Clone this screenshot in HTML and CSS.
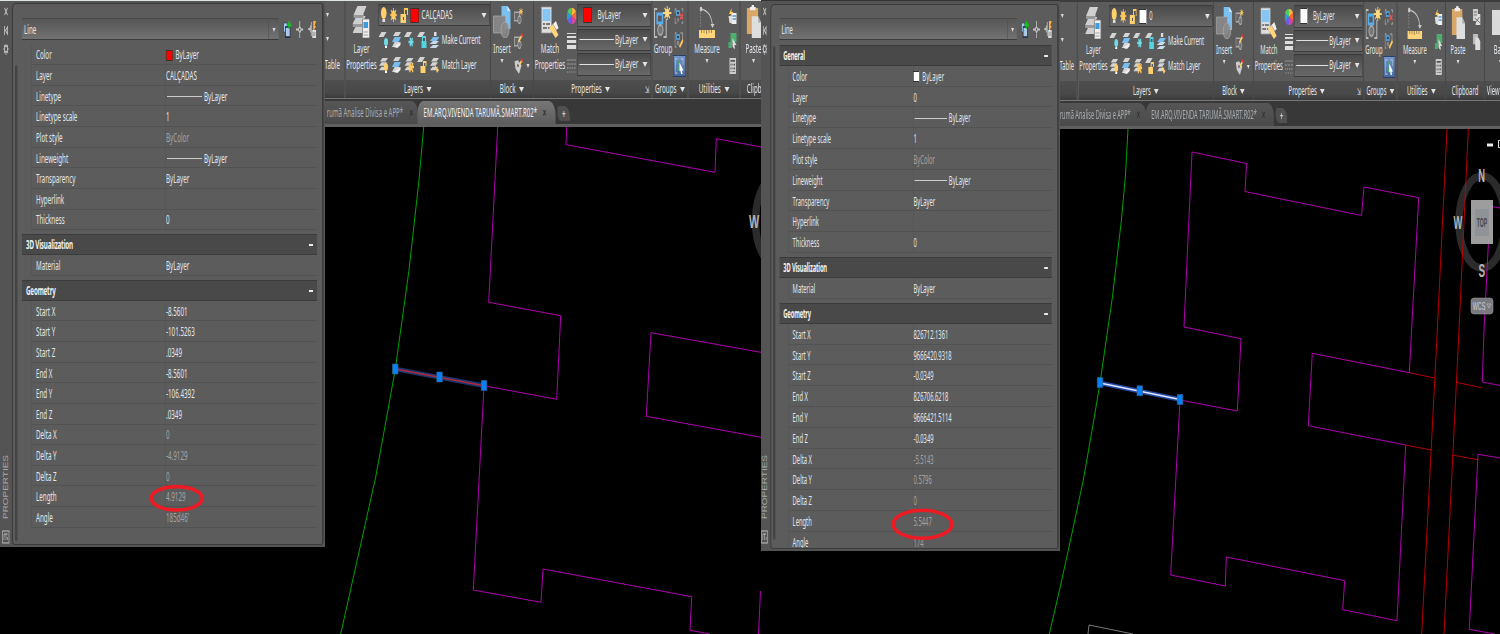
FILE: index.html
```html
<!DOCTYPE html>
<html lang="en">
<head>
<meta charset="utf-8">
<title>Drawing comparison</title>
<link rel="stylesheet" href="styles.css">
</head>
<body>
<svg class="symbols" aria-hidden="true">
  <symbol id="i-sheets" viewBox="0 0 20 16" preserveAspectRatio="none"><path d="M8 1h11l-5 4H3zM6 6h11l-5 4H1zM6 11h11l-5 4H1z" fill="#d4d4d4"/></symbol>
  <symbol id="i-layerprops" viewBox="0 0 36 32" preserveAspectRatio="none"><path d="M10 0h18l-7 9H2zM8 10h18l-6 8H0zM8 19h13v8H0z" fill="#cfcfcf"/><path d="M2 9h19l2-3v3l-2 3H2zM0 18h20l2-3v4l-2 2H0z" fill="#999"/><path d="M20 13h14v19H20z" fill="#eee" stroke="#777"/><path d="M22 16h9v6h-9z" fill="#3d9be0"/><path d="M22 26h9M22 29h9" stroke="#888"/></symbol>
  <symbol id="i-off" viewBox="0 0 20 16" preserveAspectRatio="none"><path d="M6 0h10l-6 5H0z" fill="#d4d4d4"/><circle cx="15" cy="10" r="4" fill="#6fdbe6"/><path d="M13 14h4v2h-4z" fill="#fff"/></symbol>
  <symbol id="i-iso" viewBox="0 0 20 16" preserveAspectRatio="none"><path d="M8 0h11l-5 4H3zM6 10h11l-5 5H1z" fill="#d4d4d4"/><path d="M6 5h13l-5 5H1z" fill="#78bdf0"/><path d="M4 15l14-5v3l-6 3z" fill="#eee"/></symbol>
  <symbol id="i-freeze" viewBox="0 0 20 16" preserveAspectRatio="none"><path d="M6 0h10l-6 5H0z" fill="#d4d4d4"/><path d="M9 10h10M12 6l5 8M17 6l-5 8" stroke="#6fdbe6" stroke-width="2.4"/></symbol>
  <symbol id="i-lockl" viewBox="0 0 20 16" preserveAspectRatio="none"><path d="M6 0h10l-6 5H0z" fill="#d4d4d4"/><path d="M9 9h10v7H9z" fill="#52d5e2"/><path d="M11 9V5h6v4" fill="none" stroke="#52d5e2" stroke-width="2"/></symbol>
  <symbol id="i-current" viewBox="0 0 20 16" preserveAspectRatio="none"><path d="M7 5h13l-6 4H1z" fill="#78bdf0"/><path d="M7 9h12l-6 3H0zM7 13h12l-6 3H0z" fill="#c9dbe8"/><path d="M9 0h5v4H9z" fill="#ddd"/></symbol>
  <symbol id="i-on" viewBox="0 0 20 16" preserveAspectRatio="none"><use href="#i-sheets" width="20" height="14"/><circle cx="15" cy="10" r="4" fill="#ffd06b"/><path d="M13 14h4v2h-4z" fill="#fff"/></symbol>
  <symbol id="i-thaw" viewBox="0 0 20 16" preserveAspectRatio="none"><use href="#i-sheets" width="20" height="14"/><path d="M9 10h11M11 6l7 9M18 6l-7 9" stroke="#ffc95d" stroke-width="2.5"/></symbol>
  <symbol id="i-unlockl" viewBox="0 0 20 16" preserveAspectRatio="none"><path d="M6 0h10l-6 5H0z" fill="#d4d4d4"/><path d="M7 9h10v7H7z" fill="#ffd06b"/><path d="M13 9V5h5v4" fill="none" stroke="#ffd06b" stroke-width="2"/></symbol>
  <symbol id="i-matchl" viewBox="0 0 20 16" preserveAspectRatio="none"><use href="#i-sheets" width="20" height="14"/><path d="M10 8l9 5-4 3z" fill="#ffd06b"/></symbol>
  <symbol id="i-bulb" viewBox="0 0 14 16" preserveAspectRatio="none"><ellipse cx="7" cy="6" rx="6" ry="6" fill="#ffd06b"/><path d="M4 12h6v3H4z" fill="#ddd"/></symbol>
  <symbol id="i-sun" viewBox="0 0 16 16" preserveAspectRatio="none"><path d="M8 1v14M1 8h14M3 3l10 10M13 3L3 13" stroke="#ffc95d" stroke-width="1.600"/><circle cx="8" cy="8" r="4.500" fill="#ffc95d"/></symbol>
  <symbol id="i-unlock" viewBox="0 0 16 16" preserveAspectRatio="none"><path d="M1 7h11v9H1z" fill="#ffd06b"/><path d="M9 7V2h6v6" fill="none" stroke="#ffc95d" stroke-width="2"/><path d="M6 10h2v3H6z" fill="#555"/></symbol>
  <symbol id="i-insert" viewBox="0 0 36 32" preserveAspectRatio="none"><path d="M17 0h12l6 5v18H17z" fill="#7cc0f2"/><path d="M29 0v5h6z" fill="#d5ecff"/><path d="M1 10h24v17H1z" fill="#858585" stroke="#a8a8a8"/><circle cx="24" cy="24" r="8" fill="#888" fill-opacity=".85" stroke="#aaa"/></symbol>
  <symbol id="i-blk" viewBox="0 0 18 15" preserveAspectRatio="none"><path d="M1 4h10v8H1z" fill="#666" stroke="#ababab" stroke-width="1.5"/><circle cx="11" cy="11" r="3.4" fill="#777" stroke="#bbb"/><path d="M14 0v7M10 3.500h8M11 1l6 5M17 1l-6 5" stroke="#ffc95d"/></symbol>
  <symbol id="i-blkedit" viewBox="0 0 18 15" preserveAspectRatio="none"><path d="M1 4h10v8H1z" fill="#666" stroke="#ababab" stroke-width="1.5"/><circle cx="11" cy="11" r="3.400" fill="#777" stroke="#bbb"/><path d="M9 8l7-6" stroke="#ffd06b" stroke-width="2.500"/><path d="M15 1l2 2" stroke="#e33" stroke-width="3"/></symbol>
  <symbol id="i-tag" viewBox="0 0 18 15" preserveAspectRatio="none"><path d="M1 3l7-1 7 5-5 8-7-5z" fill="#ccc"/><circle cx="8" cy="7" r="1.600" fill="#555"/><path d="M10 7l6-5" stroke="#ffd06b" stroke-width="2.500"/><path d="M15 1l2 2" stroke="#e33" stroke-width="3"/></symbol>
  <symbol id="i-matchp" viewBox="0 0 36 32" preserveAspectRatio="none"><path d="M1 1h20v26H1z" fill="#ddd" stroke="#999"/><path d="M3 3h16v12H3z" fill="#86c6f4"/><path d="M4 18h4m2 0h8M4 22h8m2 0h4" stroke="#555" stroke-width="1.500"/><path d="M16 22l8-4 11 11-6 3z" fill="#ffd57c"/><path d="M24 18l6-3 5 7-4 2z" fill="#eee"/></symbol>
  <symbol id="i-wheel" viewBox="0 0 20 16" preserveAspectRatio="none"><path d="M10 8V0a10 8 0 0 1 9 4z" fill="#ffb33d"/><path d="M10 8l9-4a10 8 0 0 1 0 8z" fill="#ff6537"/><path d="M10 8l9 4a10 8 0 0 1-9 4z" fill="#d944a2"/><path d="M10 8v8a10 8 0 0 1-9-4z" fill="#705be6"/><path d="M10 8l-9 4a10 8 0 0 1 0-8z" fill="#279edb"/><path d="M10 8L1 4a10 8 0 0 1 9-4z" fill="#54cc5b"/></symbol>
  <symbol id="i-weights" viewBox="0 0 20 16" preserveAspectRatio="none"><path d="M0 0h20v1H0zM0 3h20v2H0zM0 7h20v3H0zM0 12h20v4H0z" fill="#ddd"/></symbol>
  <symbol id="i-types" viewBox="0 0 20 16" preserveAspectRatio="none"><path d="M0 2h20" stroke="#aaa"/><path d="M0 6h20" stroke="#bbb" stroke-dasharray="5 2"/><path d="M0 10h20" stroke="#ccc" stroke-dasharray="3 2"/><path d="M0 14h20" stroke="#bbb" stroke-dasharray="2 2"/></symbol>
  <symbol id="i-group" viewBox="0 0 34 32" preserveAspectRatio="none"><path d="M6 3H1v28h5M18 31h5V13" fill="none" stroke="#bbb" stroke-width="2"/><path d="M6 8h10v9H6z" fill="none" stroke="#55aef0" stroke-width="3"/><circle cx="12" cy="24" r="5" fill="#777" stroke="#aaa" stroke-width="2"/><path d="M25 0v14M17 7h16M20 2l10 10M30 2L20 12" stroke="#ffd06b" stroke-width="1.800"/><circle cx="25" cy="7" r="4" fill="#ffd985"/></symbol>
  <symbol id="i-ungroup" viewBox="0 0 18 16" preserveAspectRatio="none"><path d="M4 1H1v4M1 10v5h3M14 1h3v3M14 15h3v-2" stroke="#bbb" stroke-width="1.200" fill="none"/><path d="M4 3h6v4H4z" fill="#444" stroke="#55aef0" stroke-width="1.600"/><circle cx="7" cy="12" r="2" fill="#888"/><path d="M11 6l6 5M17 6l-6 5" stroke="#ee5353" stroke-width="2"/></symbol>
  <symbol id="i-gedit" viewBox="0 0 18 16" preserveAspectRatio="none"><path d="M4 1H1v14h3M12 1h4v9" stroke="#bbb" stroke-width="1.200" fill="none"/><path d="M4 3h6v4H4z" fill="#444" stroke="#55aef0" stroke-width="1.600"/><circle cx="7" cy="11" r="2.500" fill="#888"/><path d="M10 15l7-7" stroke="#ffc95d" stroke-width="3"/></symbol>
  <symbol id="i-gsel" viewBox="0 0 18 18" preserveAspectRatio="none"><path d="M5 1H1v16h4M12 1h4v7" stroke="#b4c2d6" stroke-width="1.200" fill="none"/><path d="M5 3h5v4H5z" fill="#3ca964"/><circle cx="7" cy="12" r="2.500" fill="#3ca964"/><path d="M9 5l8 9h-3l1 4-3 0-1-4-2 1z" fill="#fff"/></symbol>
  <symbol id="i-measure" viewBox="0 0 32 32" preserveAspectRatio="none"><path d="M3 4v17" stroke="#888" stroke-dasharray="2 1"/><path d="M3 3c14 1 23 7 24 18" fill="none" stroke="#c4c4c4" stroke-width="1.500"/><circle cx="4" cy="3" r="2.500" fill="#ccc"/><path d="M23 18h8l-4 4z" fill="#ccc"/><path d="M0 24h32v8H0z" fill="#ffd47b"/><path d="M5 24v3m5-3v3m5-3v4m5-4v3m5-3v3" stroke="#8b7444"/></symbol>
  <symbol id="i-quick" viewBox="0 0 18 16" preserveAspectRatio="none"><path d="M7 5h10v11H7z" fill="#eee"/><path d="M1 8h7v7H3z" fill="#ddd"/><path d="M9 8h7M9 11h7" stroke="#4d98d5" stroke-width="1.500"/><path d="M7 0L2 6h4L4 9l7-5H7z" fill="#ffc95d"/></symbol>
  <symbol id="i-qsel" viewBox="0 0 18 16" preserveAspectRatio="none"><path d="M5 0h12v9H5zM1 9h7v6H1z" fill="#4caf70"/><path d="M9 5l8 7h-4l1 4-3-1-2-2z" fill="#ddd"/></symbol>
  <symbol id="i-calc" viewBox="0 0 18 17" preserveAspectRatio="none"><path d="M3 0h13v17H3z" fill="#ccc"/><path d="M5 2h9v2H5zM5 6h2v2H5zM9 6h2v2H9zM12 6h2v2h-2zM5 10h2v2H5zM9 10h2v2H9zM12 10h2v2h-2zM5 14h2v1H5zM9 14h5v1H9z" fill="#555"/></symbol>
  <symbol id="i-paste" viewBox="0 0 30 32" preserveAspectRatio="none"><path d="M0 3h24v25H0z" fill="#d9a868"/><path d="M7 5V2h3l1-2h4l1 2h3v3z" fill="#eee"/><path d="M11 11h13l6 6v15H11z" fill="#dedede"/><path d="M24 11v6h6z" fill="#aaa"/></symbol>
  <symbol id="i-cut" viewBox="0 0 18 16" preserveAspectRatio="none"><path d="M1 0h11v12H1z" fill="#ccc"/><path d="M7 5h10v11H7z" fill="#ddd"/><path d="M3 3h7M3 6h7M6 9l10 5M6 14l9-6" stroke="#555"/></symbol>
  <symbol id="i-copy" viewBox="0 0 18 17" preserveAspectRatio="none"><path d="M1 0h11v11H1z" fill="#bbb"/><path d="M6 4h7l4 4v9H6z" fill="#ddd"/></symbol>
  <symbol id="i-base" viewBox="0 0 32 32" preserveAspectRatio="none"><path d="M0 3h32v25H0z" fill="#dadada"/></symbol>
  <symbol id="i-addsel" viewBox="0 0 20 17" preserveAspectRatio="none"><path d="M2 2h8v9H2z" fill="#9ccaf1" stroke="#34414f"/><path d="M6 6h10v10H6z" fill="#a9c8ea" stroke="#1c2a3b" stroke-width="1.500"/><path d="M14 0v8M10 4h9" stroke="#14c01f" stroke-width="3"/></symbol>
  <symbol id="i-pick" viewBox="0 0 16 16" preserveAspectRatio="none"><path d="M8 0v5M8 11v5M0 8h5M11 8h5M8 5l3 3-3 3-3-3z" fill="none" stroke="#c6c6c6" stroke-width="1.700"/></symbol>
  <symbol id="i-qselect" viewBox="0 0 20 17" preserveAspectRatio="none"><path d="M8 1v14M1 8h7M8 4L4 8l4 4" fill="none" stroke="#c6c6c6" stroke-width="1.600"/><path d="M12 0h6l-3 5h3l-6 6z" fill="#ffb13b"/><path d="M10 9h8v8h-8z" fill="#ddd"/><path d="M11 12h6M11 14h6" stroke="#666"/></symbol>
</svg>
<main class="compare">
  <section class="palette-cell" data-palette="left"></section>
  <section class="work work-left">
    <div class="ribbon-cell" data-ribbon="left"></div>
    <svg class="canvas" viewBox="325 127 436 507">
      <g class="plan">
        <path class="boundary" d="M423.700 127L419 180L409 270L395.300 369L386.700 417L375.700 477L361.700 540L340.700 634"/>
        <path d="M497.700 127L488.700 302.300L560.700 315.700L556.700 399.300L484 385.700L473.300 590L541 602.300L543 569L691.700 596.700L690 630.300L710 634"/>
        <path d="M566.700 127L566 144.700L715 172.300L716.300 138.700L761 147M761 352.300L651 332.700L646.300 416.300L761 437.300M760.500 591L758.500 634"/>
      </g>
      <path class="glow" d="M395.300 369L484 385.700"/><path class="picked picked-red" d="M395.300 369L484 385.700"/>
      <g class="grips"><path d="M392.500 364h5.500v10h-5.500zM436.800 372h5.500v10h-5.500zM481.300 380.500h5.500v10h-5.500z"/></g>
      <ellipse class="ring" cx="779" cy="221" rx="23.500" ry="46"/>
      <text class="compass" transform="translate(754 228) scale(.6 1)">W</text>
    </svg>
  </section>
  <section class="palette-cell" data-palette="right"></section>
  <section class="work work-right">
    <div class="ribbon-cell" data-ribbon="right"></div>
    <svg class="canvas" viewBox="1060 129 440 505">
      <ellipse class="ring" cx="1482" cy="222" rx="23" ry="46"/>
      <g class="plan">
        <path class="boundary" d="M1128 129L1125.500 175L1121.300 221L1112.300 298L1100 383L1093.300 423L1083.300 480L1072.700 530L1060 588L1049.300 634"/>
        <path d="M1192 152L1184 327L1241 338.700L1237.300 411L1180 400L1170.700 575L1225.300 586L1226.300 557L1344.700 580.700L1342.700 609.700L1397 620.700L1405.700 445L1308.300 425.700L1312.300 353.300L1409.300 372.700L1418.700 197.700L1364 187L1361.500 215.500L1245 191.500L1246.500 163.500Z"/>
        <path d="M1500 208L1490.300 206.300L1484 330L1482.300 382L1500 385.500M1500 458L1478 454.300L1469.300 629.300L1495 634"/>
        <path class="axis" d="M1447 129L1437.300 330L1421.700 634M1468.300 129L1459 330L1444 634M1409.300 372.700L1434.700 378M1405.700 445L1431 450M1456 382.300L1481.700 387.700M1452.300 455L1477.700 459.700"/>
        <path class="grey" d="M1088 634L1089 625L1133 634"/>
      </g>
      <path class="cube" d="M1471 200h22v44h-22z"/><path class="cube-face" d="M1475 209h14v27h-14z"/>
      <rect class="wcs" x="1471" y="298" width="22" height="16" rx="3"/>
      <path class="glow glow-bright" d="M1100 383L1180 399.500"/><path class="picked" d="M1100 383L1180 399.500"/>
      <g class="grips"><path d="M1097.300 377.500h5.500v10h-5.500zM1137 385.700h5.500v10h-5.500zM1177.300 394.500h5.500v10h-5.500z"/></g>
      <g class="compass"><text transform="translate(1481.700 181.500) scale(.52 1)">N</text><text transform="translate(1458 228.500) scale(.52 1)">W</text><text transform="translate(1481.700 277) scale(.55 1)">S</text></g>
      <text class="cube-label" transform="translate(1482 226.500) scale(.42 1)">TOP</text>
      <text class="wcs-label" transform="translate(1479 310) scale(.48 1)">WCS</text>
      <path class="wcs-arrow" d="M1487 304h4l-2 4z"/>
      <path class="window-buttons" d="M1487 143.500h6v3h-6z"/><path class="restore" d="M1501 140.500h-2.500v7h2.500"/>
    </svg>
  </section>
  <svg class="marks" viewBox="0 0 1500 634"><ellipse cx="176.700" cy="498.300" rx="25.500" ry="11.700"/><ellipse cx="922.500" cy="524.300" rx="29.300" ry="14"/></svg>
</main>
<script src="app.js"></script>
</body>
</html>
```

FILE: styles.css
```css
* { box-sizing: border-box; }
body { margin: 0; background: #000; font: 12.5px/16px "Noto Sans", "Open Sans", sans-serif; color: #e3e6ea; overflow: hidden; }
.symbols { display: none; }
.compare { position: relative; display: grid; grid-template-columns: 325px 436px 299px 440px; width: 1500px; height: 634px; overflow: hidden; }
svg { display: block; flex: none; }
.marks { position: absolute; inset: 0; width: 1500px; height: 634px; fill: none; stroke: #ed1c24; stroke-width: 3.6; pointer-events: none; }

/* Both captures are shown narrower than they were drawn. */
.squeeze { transform: scaleX(.5); transform-origin: 0 0; width: 872px; }
.right .squeeze, .squeeze.right { transform: scaleX(.465); }

/* work area */
.work { display: flex; flex-direction: column; min-width: 0; }
.ribbon-cell { height: 127px; flex: none; overflow: hidden; }
.work-right .ribbon-cell { height: 129px; }
.canvas { width: 100%; flex: 1; min-height: 0; overflow: visible; }
.plan { fill: none; stroke: #c400c4; stroke-width: .9; }
.boundary { stroke: #00b400; }
.axis { stroke: #cc0000; }
.grey { stroke: #888; }
.glow { stroke: #17386f; stroke-width: 4.5; }
.glow-bright { stroke: #2549a0; }
.picked { stroke: #dfe6ff; stroke-width: 1.6; }
.picked-red { stroke: #b3263c; }
.grips { fill: #0a80f5; stroke: #33628f; stroke-width: .6; }
.ring { fill: none; stroke: #2b2b2b; stroke-width: 7.5; }
.compass { fill: #b4b4b4; font: bold 18px "Liberation Sans", sans-serif; text-anchor: middle; }
.cube { fill: #a5a5a5; fill-opacity: .95; } .cube-face { fill: #8f9296; }
.cube-label { fill: #44474b; font: bold 12px "Liberation Sans", sans-serif; text-anchor: middle; }
.wcs { fill: #85858d; fill-opacity: .9; stroke: #a0a0a6; stroke-width: .5; }
.wcs-label { fill: #d3d3d3; font: 11px "Liberation Sans", sans-serif; text-anchor: middle; }
.wcs-arrow { fill: none; stroke: #c5c5c5; stroke-width: .6; }
.window-buttons { fill: #ececec; }
.restore { fill: none; stroke: #ececec; }

/* ribbon */
.ribbon { height: 99px; display: flex; background: #5b5b5b; border-top: 1px solid #dfe5df; border-bottom: 1px solid #777; }
.squeeze.right { width: 950px; }
.right .ribbon { height: 101px; border-top: 2px solid #3d3d3d; }
.panel { flex: none; display: flex; flex-direction: column; border-right: 2px solid #484848; overflow: hidden; white-space: nowrap; }
.panel-body { flex: none; height: 79px; display: flex; }
.panel-title { flex: 1; display: flex; align-items: center; justify-content: center; gap: 7px; background: linear-gradient(#4e4e4e, #484848 70%, #3b3b3b); }
.panel-title .corner { margin-left: auto; margin-right: 5px; font-size: 10px; }
.right .panel-title { padding-top: 1px; }
.down { width: 0; height: 0; border: 5px solid transparent; border-top: 5px solid #e4e4e4; border-bottom: 0; flex: none; }
.down-sm { width: 0; height: 0; border: 3.5px solid transparent; border-top: 4px solid #ddd; border-bottom: 0; flex: none; }
.stub { width: 41px; }
.right .stub { width: 38px; }
.stub-body { flex-direction: column; align-items: flex-end; width: 30px; padding-top: 12px; }
.stub-body .down-sm { margin: 0 22px 20px 0; }
.stub-body .label { margin-top: -4px; }
.big { display: flex; flex-direction: column; align-items: center; padding-top: 5px; flex: none; }
.big svg { margin-bottom: 3px; width: 36px; height: 32px; }
.big .down-sm { margin-top: 2px; }
.layers { width: 291px; } .layers .big { width: 64px; }
.right .layers { margin-left: 2px; }
.layer-tools { display: flex; flex-direction: column; width: 224px; padding-top: 3px; margin-left: 2px; }
.combo { display: flex; align-items: center; height: 22px; flex: none; border: 1.5px solid #3a3a3a; background: linear-gradient(#4b4b4b, #696969); padding: 0 6px 0 4px; }
.combo .down { margin-left: auto; }
.layer-combo { padding-left: 3px; gap: 5px; }
.layer-combo svg { width: 16px; height: 16px; }
.layer-combo svg:first-child { width: 13px; }
.swatch { width: 17px; height: 15px; flex: none; border: 1px solid #333; }
.red { background: #f00; } .white { background: #fff; }
.icon-row { display: flex; align-items: center; height: 16px; gap: 5.5px; margin-top: 6px; letter-spacing: -.25px; }
.icon-row + .icon-row { margin-top: 9px; }
.icon-row svg { width: 20px; height: 16px; }
.icon-row .label { margin-left: -1px; }
.block { width: 86px; } .block .big { width: 44px; }
.stack { display: flex; flex-direction: column; padding: 7px 0 0 2px; gap: 9px; }
.stack svg { width: 18px; height: 16px; }
.stack-row { display: flex; align-items: center; gap: 7px; }
.props { width: 237px; } .props .big { width: 64px; }
.prop-icons { display: flex; flex-direction: column; gap: 9px; padding: 7px 0 0 2px; width: 22px; }
.prop-icons svg { width: 19px; height: 16px; }
.prop-combos { display: flex; flex-direction: column; gap: 2px; padding-top: 3px; width: 148px; }
.prop-combos .combo { height: 22.5px; }
.prop-combos .swatch { margin: 0 11px 0 8px; height: 16px; }
.stroke { width: 69px; height: 1.2px; background: #e2e2e2; flex: none; margin-right: 2px; }
.groups { width: 72px; } .groups .big { width: 42px; }
.groups .stack { padding-left: 2px; gap: 8px; }
.selected { margin: -1px 0 0 -3px; width: 26px; height: 22px; padding: 2px 3px; background: linear-gradient(#7596cb, #49689b); border: 1px solid #29406b; }
.utils { width: 104px; } .utils .big { width: 74px; } .utils .big svg { width: 32px; }
.utils .stack { padding-left: 5px; }
.clip { width: 84px; } .clip .big { width: 52px; padding-top: 4px; } .clip .big svg { width: 29px; height: 33px; }
.clip .stack { padding-left: 5px; }
.view { width: 90px; } .view .big { width: 66px; } .view .panel-title { justify-content: flex-start; padding-left: 4px; }

/* drawing tabs */
.tabs { height: 28px; display: flex; align-items: stretch; background: #383838; border-bottom: 3px solid #606060; padding-top: 2px; white-space: nowrap; }
.tab { display: flex; align-items: center; flex: none; background: linear-gradient(#565656, #4a4a4a); color: #a7adb2; font-size: 12px; border-radius: 0 14px 0 0 / 0 12px 0 0; }
.tab-a { width: 186px; justify-content: flex-end; padding-right: 10px; gap: 13px; letter-spacing: 0; }
.right .tab-a { width: 185px; padding-right: 13px; }
.tab-b { width: 276px; margin-left: -1px; padding-left: 12px; gap: 11px; letter-spacing: .17px; border-radius: 12px 14px 0 0; }
.tab.active { background: linear-gradient(#777, #5d5d5d); color: #f2f2f2; }
.tab .close { color: #333; font: bold 12px/12px "Liberation Sans", sans-serif; }
.new-tab { width: 25px; margin: 5px 0 3px 4px; display: grid; place-items: center; background: #505050; border-radius: 4px 12px 0 8px; font-weight: bold; color: #ccc; }

/* properties palette */
.palette-cell { min-width: 0; overflow: hidden; height: 547px; }
.palette-cell.right { height: 551px; }
.palette { --row: 20.63px; width: 650px; height: 547px; display: flex; background: #545454; border-top: 1px solid #dfe5df; white-space: nowrap; }
.right .palette { --row: 20.8px; width: 647px; height: 551px; margin-left: -4px; border-top: 1px solid #333; }
.side { width: 24px; flex: none; display: flex; }
.sheet { flex: 1; margin: 2px 3px 2px 0; border: 1px solid #3b3b3b; border-width: 1px 3px 1px 2px; border-radius: 7px 5px 5px 5px; background: #5c5c5c; padding: 14px 10px 0 18px; display: flex; flex-direction: column; overflow: hidden; }
.right .sheet { margin-top: 3px; padding-top: 13px; }
.picker { display: flex; align-items: center; height: 22px; flex: none; }
.picker-box { width: 513px; height: 22px; display: flex; align-items: center; padding: 1px 6px 0 4px; background: linear-gradient(#565656, #727272); border-bottom: 1px solid #3a3a3a; border-top: 1px solid #494949; margin-right: 8px; }
.picker-box .drop { margin-left: auto; height: 100%; padding-left: 7px; border-left: 1px solid #4a4a4a; display: flex; align-items: center; }
.picker svg { width: 19px; height: 17px; }
.picker svg + svg { margin-left: 8px; }
.picker svg:nth-of-type(2) { width: 15px; }
.scroll { display: flex; margin: 4.6px 0 0 -14px; flex: 1; }
.thumb { width: 5px; height: 476px; margin: 20px 9px 0 0; background: #444; border-radius: 3px; flex: none; }
.right .thumb { margin-top: 1px; height: 494px; }
.groups-list { flex: 1; }
.right .groups-list { margin-right: 2px; }
.head { height: 21.3px; background: #494949; border-top: 1px solid #3b3b3b; border-bottom: 1px solid #3b3b3b; display: flex; align-items: center; justify-content: space-between; padding: 1px 8px 0 8px; font-weight: bold; letter-spacing: -.35px; color: #f1f1f1; }
.head i { width: 8px; height: 2px; background: #eee; }
.rows { margin: 0 0 3.7px 19px; border-left: 1px solid #535353; }
.row { height: var(--row); display: grid; grid-template-columns: 268px 1fr; border-bottom: 1px solid #525252; }
.row > span { display: flex; align-items: center; padding-top: 2px; }
.row > span:first-child { padding-left: 8px; border-right: 1px solid #535353; }
.row .value { padding-left: 0; gap: 6px; }
.row .swatch { width: 13px; height: 11px; }
.row .stroke { width: 70px; margin: 0 -2px 0 2px; background: #cdcdcd; }
.row .muted { color: #a3a3a3; }
```

FILE: app.js
```js
const icon = (name) => `<svg><use href="#i-${name}" width="100%" height="100%"/></svg>`;
const down = '<b class="down"></b>';
const downSm = '<b class="down-sm"></b>';
const big = (name, ...lines) => `<div class="big">${icon(name)}${lines.join("")}</div>`;
const label = (text) => `<span class="label">${text}</span>`;
const panel = (cls, body, title) =>
  `<div class="panel ${cls}"><div class="panel-body ${cls}-body">${body}</div><div class="panel-title">${title}</div></div>`;

function ribbon(side) {
  const left = side === "left";
  const color = left ? "red" : "white";
  const line = `<div class="combo"><i class="stroke"></i>ByLayer${down}</div>`;
  const strip = [
    panel("stub", downSm + downSm + label("Table"), ""),
    panel("layers", big("layerprops", label("Layer"), label("Properties")) +
      `<div class="layer-tools">
        <div class="combo layer-combo">${icon("bulb")}${icon("sun")}${icon("unlock")}<i class="swatch ${color}"></i>${left ? "CALÇADAS" : "0"}${down}</div>
        <div class="icon-row">${["off", "iso", "freeze", "lockl", "current"].map(icon).join("")}${label("Make Current")}</div>
        <div class="icon-row">${["on", "iso", "thaw", "unlockl", "matchl"].map(icon).join("")}${label("Match Layer")}</div>
      </div>`, "Layers" + down),
    panel("block", big("insert", label("Insert"), downSm) +
      `<div class="stack">${icon("blk")}${icon("blkedit")}<div class="stack-row">${icon("tag")}${downSm}</div></div>`, "Block" + down),
    panel("props", big("matchp", label("Match"), label("Properties")) +
      `<div class="prop-icons">${icon("wheel")}${icon("weights")}${icon("types")}</div>
       <div class="prop-combos"><div class="combo"><i class="swatch ${color}"></i>ByLayer${down}</div>${line}${line}</div>`,
      `<span class="corner"></span>Properties${down}<span class="corner">⇲</span>`),
    panel("groups", big("group", label("Group")) +
      `<div class="stack">${icon("ungroup")}${icon("gedit")}<div class="selected">${icon("gsel")}</div></div>`, "Groups" + down),
    panel("utils", big("measure", label("Measure"), downSm) +
      `<div class="stack">${icon("quick")}${icon("qsel")}${icon("calc")}</div>`, "Utilities" + down),
    panel("clip", big("paste", label("Paste"), downSm) +
      `<div class="stack">${icon("cut")}${icon("copy")}</div>`, "Clipboard"),
    left ? "" : panel("view", big("base", label("Base"), downSm), "View"),
  ].join("");
  return `<div class="squeeze ${side}"><div class="ribbon">${strip}</div>
    <div class="tabs"><div class="tab tab-a">rumã Analise Divisa e APP*<span class="close">×</span></div>
    <div class="tab tab-b ${left ? "active" : ""}">EM.ARQ.VIVENDA TARUMÃ.SMART.R02*<span class="close">×</span></div>
    <div class="new-tab">+</div></div></div>`;
}

const stroke = '<i class="stroke"></i>';
const row = ([name, value, muted]) =>
  `<div class="row"><span>${name}</span><span class="value ${muted ? "muted" : ""}">${value}</span></div>`;
const head = (title) => `<div class="head">${title}<i></i></div>`;
const rows = (list) => `<div class="rows">${list.map(row).join("")}</div>`;

const data = {
  left: { color: "red", layer: "CALÇADAS", geometry: [
    ["Start X", "-8.5601"], ["Start Y", "-101.5263"], ["Start Z", ".0349"],
    ["End X", "-8.5601"], ["End Y", "-106.4392"], ["End Z", ".0349"],
    ["Delta X", "0", 1], ["Delta Y", "-4.9129", 1], ["Delta Z", "0", 1],
    ["Length", "4.9129", 1], ["Angle", "185d46'", 1]] },
  right: { color: "white", layer: "0", geometry: [
    ["Start X", "826712.1361"], ["Start Y", "9666420.9318"], ["Start Z", "-0.0349"],
    ["End X", "826706.6218"], ["End Y", "9666421.5114"], ["End Z", "-0.0349"],
    ["Delta X", "-5.5143", 1], ["Delta Y", "0.5796", 1], ["Delta Z", "0", 1],
    ["Length", "5.5447", 1], ["Angle", "174", 1]] },
};

function palette(side) {
  const d = data[side];
  const general = [
    ["Color", `<i class="swatch ${d.color}"></i>ByLayer`], ["Layer", d.layer],
    ["Linetype", stroke + "ByLayer"], ["Linetype scale", "1"], ["Plot style", "ByColor", 1],
    ["Lineweight", stroke + "ByLayer"], ["Transparency", "ByLayer"], ["Hyperlink", ""], ["Thickness", "0"]];
  return `<div class="squeeze"><div class="palette">
    <svg class="side" viewBox="0 0 24 546" width="24" height="546">
      <g fill="none" stroke="#c2c2c2" stroke-width="1.6"><path d="M9 7l6 7M15 7l-6 7M9 25v9M15 26v7l-4-3.500z"/><circle cx="12" cy="48" r="3"/><path d="M12 43v2M12 51v3M7 48h2M15 48h2M8 44l2 2M16 44l-2 2M8 52l2-2M16 52l-2-2"/><path d="M5 530h13v12H5zM8 533h7M8 533v6M12 533v6M15 536v3" stroke-width="1.200"/></g>
      <text transform="translate(16 518) rotate(-90)" textLength="64" lengthAdjust="spacingAndGlyphs" font-size="14" font-family="Liberation Sans, sans-serif" fill="#a9a9a9">PROPERTIES</text>
    </svg>
    <div class="sheet">
      <div class="picker"><div class="picker-box">Line<span class="drop">${downSm}</span></div>${icon("addsel")}${icon("pick")}${icon("qselect")}</div>
      <div class="scroll"><div class="thumb"></div><div class="groups-list">
        ${side === "right" ? head("General") : ""}${rows(general)}
        ${head("3D Visualization")}${rows([["Material", "ByLayer"]])}
        ${head("Geometry")}${rows(d.geometry)}
      </div></div>
    </div></div></div>`;
}

document.querySelectorAll("[data-ribbon]").forEach((el) => { el.innerHTML = ribbon(el.dataset.ribbon); });
document.querySelectorAll("[data-palette]").forEach((el) => {
  el.classList.add(el.dataset.palette);
  el.innerHTML = palette(el.dataset.palette);
});
```
